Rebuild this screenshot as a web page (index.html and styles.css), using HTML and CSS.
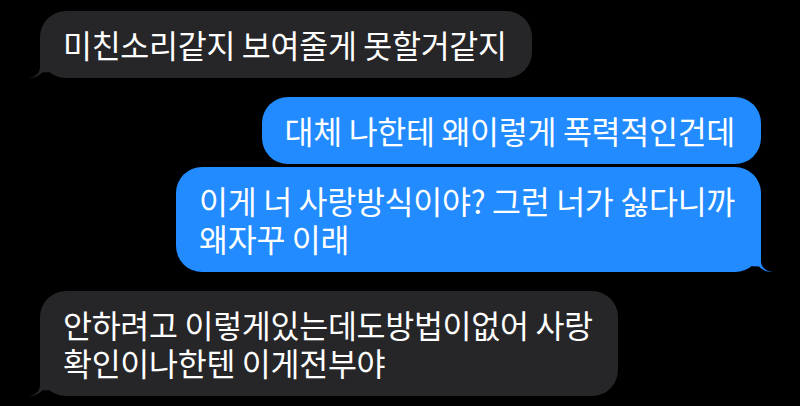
FILE: index.html
```html
<!DOCTYPE html>
<html>
<head>
    <link rel="stylesheet" href="styles.css">
</head>
<body>
    <div id="chat">
        <div class="row in">
            <div class="bubble">
                미친소리같지 보여줄게 못할거같지
                <svg class="tail" viewBox="0 0 26 30"><path d="M12 0 V19 C12 25 7 29.5 0 30 C7 30.5 11 27.5 14 24.5 L26 24 L26 0 Z"/></svg>
            </div>
        </div>

        <div class="row out">
            <div class="bubble">대체 나한테 왜이렇게 폭력적인건데</div>
        </div>
        <div class="row out tight">
            <div class="bubble">
                이게 너 사랑방식이야? 그런 너가 싫다니까<br>왜자꾸 이래
                <svg class="tail" viewBox="0 0 26 30"><path d="M12 0 V19 C12 25 7 29.5 0 30 C7 30.5 11 27.5 14 24.5 L26 24 L26 0 Z"/></svg>
            </div>
        </div>

        <div class="row in">
            <div class="bubble">
                안하려고 이렇게있는데도방법이없어 사랑<br>확인이나한텐 이게전부야
                <svg class="tail" viewBox="0 0 26 30"><path d="M12 0 V19 C12 25 7 29.5 0 30 C7 30.5 11 27.5 14 24.5 L26 24 L26 0 Z"/></svg>
            </div>
        </div>
    </div>
</body>
</html>
```

FILE: styles.css
```css
body {
    margin: 0;
    background-color: #000;
    font-family: "Noto Sans CJK KR", "Noto Sans", sans-serif;
    color: #fff;
}

#chat {
    display: flex;
    flex-direction: column;
    gap: 19px;
    padding: 10.5px 39px 0 40px;
}

.row {
    display: flex;
}

.row.out {
    justify-content: flex-end;
}

.row.tight {
    margin-top: -16px;
}

.bubble {
    position: relative;
    padding: 14.5px 25px 14.5px 23px;
    border-radius: 26px;
    font-size: 31.5px;
    line-height: 38px;
    letter-spacing: -0.3px;
    white-space: nowrap;
}

.in .bubble {
    background-color: #262628;
}

.out .bubble {
    background-color: #218bff;
    padding: 14.5px 26px 14.5px 23px;
}

.tail {
    position: absolute;
    bottom: 0;
    width: 26px;
    height: 30px;
}

.in .tail {
    left: -12px;
    fill: #262628;
}

.out .tail {
    right: -12px;
    fill: #218bff;
    transform: scaleX(-1);
}
```
